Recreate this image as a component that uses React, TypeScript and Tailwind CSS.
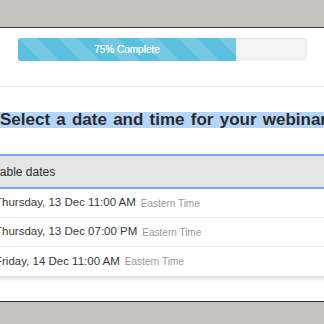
import React from "react";

const rows = [
  { date: "Thursday, 13 Dec 11:00 AM" },
  { date: "Thursday, 13 Dec 07:00 PM" },
  { date: "Friday, 14 Dec 11:00 AM" },
];

export default function App() {
  return (
    <div
      className="w-[324px] h-[324px] overflow-hidden flex flex-col bg-white"
      style={{ fontFamily: '"Liberation Sans", Arial, sans-serif' }}
    >
      <div className="h-[28px] shrink-0 bg-[#c6c3bc] border-b border-[#3a3a3a]" />
      <div className="flex-1 flex flex-col overflow-hidden">
        <div className="pt-[10px] px-[18px]">
          <div className="h-[23px] w-[289px] rounded-[3px] bg-[#f3f3f3] shadow-[inset_0_1px_2px_rgba(0,0,0,0.08)] overflow-hidden flex">
            <div className="w-[218px] h-full bg-[#5bc0de] bg-[linear-gradient(45deg,rgba(255,255,255,.15)_25%,transparent_25%,transparent_50%,rgba(255,255,255,.15)_50%,rgba(255,255,255,.15)_75%,transparent_75%,transparent)] bg-[length:40px_40px] flex items-center justify-center text-white text-[10px] [text-shadow:0_0_0.4px_#fff]">
              75% Complete
            </div>
          </div>
        </div>
        <div className="mt-[25px] h-px bg-[#e6e6e6]" />
        <div className="mt-[25px] h-[16px] bg-[#b4d4f8] flex items-center">
          <span className="whitespace-nowrap font-bold text-[17px] leading-[16px] text-[#2b2b2b] [word-spacing:1.5px]">
            Select a date and time for your webinar
          </span>
        </div>
        <div className="mt-[26px] -ml-[40px] w-[380px] bg-white shadow-[0_2px_5px_rgba(0,0,0,0.18)]">
          <div className="h-[35px] border-y-2 border-[#79a8e6] bg-[#e5e5e5] flex items-center pl-[14px]">
            <span className="text-[12px] text-[#2e2e2e] whitespace-nowrap">Available dates</span>
          </div>
          {rows.map((r, i) => (
            <div
              key={i}
              className={`h-[29px] flex items-center pl-[35px] gap-[5px] whitespace-nowrap ${i < rows.length - 1 ? "border-b border-[#ececec]" : ""}`}
            >
              <span className="text-[11.5px] text-[#3a3a3a]">{r.date}</span>
              <span className="text-[10px] text-[#999]">Eastern Time</span>
            </div>
          ))}
        </div>
      </div>
      <div className="h-[23px] shrink-0 bg-[#c6c3bc] border-t border-[#2e2e2e]" />
    </div>
  );
}
